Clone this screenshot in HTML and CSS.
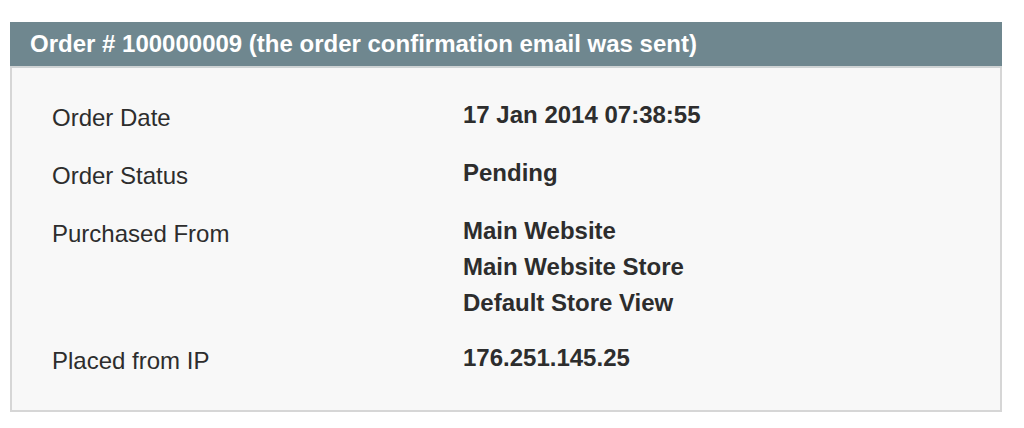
FILE: index.html
```html
<!DOCTYPE html>
<html>
<head>
<meta charset="utf-8">
<link rel="stylesheet" href="styles.css">
</head>
<body>
<div class="box">
  <div class="box-head">Order # 100000009 (the order confirmation email was sent)</div>
  <div class="box-body">
    <div class="info">
      <div class="label">Order Date</div>
      <div class="value">17 Jan 2014 07:38:55</div>
      <div class="label">Order Status</div>
      <div class="value">Pending</div>
      <div class="label">Purchased From</div>
      <div class="value">Main Website<br>Main Website Store<br>Default Store View</div>
      <div class="label">Placed from IP</div>
      <div class="value">176.251.145.25</div>
    </div>
  </div>
</div>
</body>
</html>
```

FILE: styles.css
```css
html, body {
  margin: 0;
  padding: 0;
  background: #ffffff;
}
body {
  font-family: "Liberation Sans", Arial, Helvetica, sans-serif;
  color: #2d2d2d;
}
.box {
  margin: 22px 0 0 10px;
  width: 992px;
}
.box-head {
  box-sizing: border-box;
  height: 46px;
  background: #6f878f;
  color: #ffffff;
  font-weight: bold;
  font-size: 24px;
  line-height: 44px;
  padding-left: 20px;
  border-bottom: 2px solid #cfd3d4;
}
.box-body {
  background: #f8f8f8;
  border: 2px solid #d6d6d6;
  border-top: 0;
  padding: 29px 0 31px 40px;
}
.info {
  display: grid;
  grid-template-columns: 411px 1fr;
  row-gap: 19px;
}
.label {
  font-size: 24px;
  line-height: 36px;
  padding-top: 3px;
}
.value {
  font-size: 24px;
  font-weight: bold;
  line-height: 36px;
}
```
